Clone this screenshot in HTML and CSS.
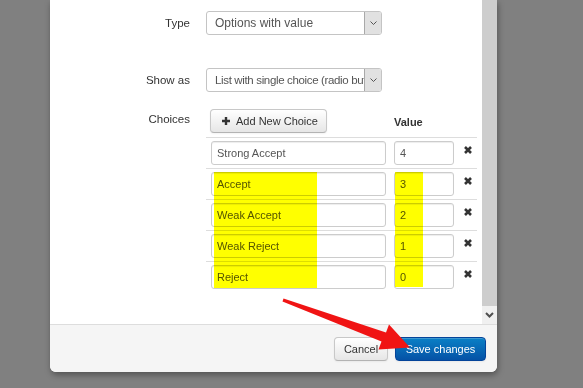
FILE: index.html
```html
<!DOCTYPE html>
<html lang="en">
<head>
    <meta name="viewport" content="width=device-width, initial-scale=1.0" />
    <title>Edit Field</title>
    <link rel="stylesheet" href="styles.css">
</head>
<body>
    <div class="page">
        <div class="modal">
            <div class="modal-body">
                <div class="form">
                    <div class="form-row row-type">
                        <label class="form-label">Type</label>
                        <div class="select">
                            <span class="select-text">Options with value</span>
                            <span class="select-arrow">
                                <svg width="7" height="4" viewBox="0 0 7 4"><path d="M0.5 0.5 L3.5 3.5 L6.5 0.5" fill="none" stroke="#555" stroke-width="1"/></svg>
                            </span>
                        </div>
                    </div>
                    <div class="form-row row-show">
                        <label class="form-label">Show as</label>
                        <div class="select">
                            <span class="select-text select-long">List with single choice (radio buttons)</span>
                            <span class="select-arrow">
                                <svg width="7" height="4" viewBox="0 0 7 4"><path d="M0.5 0.5 L3.5 3.5 L6.5 0.5" fill="none" stroke="#555" stroke-width="1"/></svg>
                            </span>
                        </div>
                    </div>
                    <div class="form-row row-choices">
                        <label class="form-label label-choices">Choices</label>
                        <table class="choices">
                            <tr class="choices-head">
                                <td class="col-name">
                                    <button class="btn btn-add">
                                        <svg class="icon-plus" width="8" height="8" viewBox="0 0 8 8"><path d="M4 0 V8 M0 4 H8" stroke="#333" stroke-width="2.4"/></svg>
                                        Add New Choice
                                    </button>
                                </td>
                                <td class="col-value"><span class="head-value">Value</span></td>
                                <td class="col-remove"></td>
                            </tr>
                            <tr>
                                <td class="col-name"><input class="input input-name" type="text" value="Strong Accept"></td>
                                <td class="col-value"><input class="input input-value" type="text" value="4"></td>
                                <td class="col-remove"><svg class="icon-remove" width="8" height="8" viewBox="0 0 8 8"><path d="M1 1 L7 7 M7 1 L1 7" stroke="#333" stroke-width="2.6"/></svg></td>
                            </tr>
                            <tr>
                                <td class="col-name"><input class="input input-name" type="text" value="Accept"></td>
                                <td class="col-value"><input class="input input-value" type="text" value="3"></td>
                                <td class="col-remove"><svg class="icon-remove" width="8" height="8" viewBox="0 0 8 8"><path d="M1 1 L7 7 M7 1 L1 7" stroke="#333" stroke-width="2.6"/></svg></td>
                            </tr>
                            <tr>
                                <td class="col-name"><input class="input input-name" type="text" value="Weak Accept"></td>
                                <td class="col-value"><input class="input input-value" type="text" value="2"></td>
                                <td class="col-remove"><svg class="icon-remove" width="8" height="8" viewBox="0 0 8 8"><path d="M1 1 L7 7 M7 1 L1 7" stroke="#333" stroke-width="2.6"/></svg></td>
                            </tr>
                            <tr>
                                <td class="col-name"><input class="input input-name" type="text" value="Weak Reject"></td>
                                <td class="col-value"><input class="input input-value" type="text" value="1"></td>
                                <td class="col-remove"><svg class="icon-remove" width="8" height="8" viewBox="0 0 8 8"><path d="M1 1 L7 7 M7 1 L1 7" stroke="#333" stroke-width="2.6"/></svg></td>
                            </tr>
                            <tr>
                                <td class="col-name"><input class="input input-name" type="text" value="Reject"></td>
                                <td class="col-value"><input class="input input-value" type="text" value="0"></td>
                                <td class="col-remove"><svg class="icon-remove" width="8" height="8" viewBox="0 0 8 8"><path d="M1 1 L7 7 M7 1 L1 7" stroke="#333" stroke-width="2.6"/></svg></td>
                            </tr>
                        </table>
                    </div>
                </div>
                <div class="scrollbar">
                    <div class="scroll-thumb"></div>
                    <div class="scroll-btn">
                        <svg width="9" height="6" viewBox="0 0 9 6"><path d="M1 1 L4.5 4.5 L8 1" fill="none" stroke="#505050" stroke-width="2"/></svg>
                    </div>
                </div>
            </div>
            <div class="modal-footer">
                <button class="btn btn-cancel">Cancel</button>
                <button class="btn btn-primary">Save changes</button>
            </div>
        </div>

        <!-- annotation overlays -->
        <div class="mark mark-name"></div>
        <div class="mark mark-value"></div>
        <svg class="arrow" width="583" height="388" viewBox="0 0 583 388">
            <polygon points="283.5,298.5 386,332.6 389,324.5 410,347.5 378.5,349.5 381.5,341.6 282.5,301.5" fill="#f01414"/>
        </svg>
    </div>
</body>
</html>
```

FILE: styles.css
```css
* {
    padding: 0;
    margin: 0;
    box-sizing: border-box;
    font-family: "Liberation Sans", Arial, sans-serif;
}
body {
    background-color: #808080;
    overflow: hidden;
}
.page {
    position: relative;
    width: 583px;
    height: 388px;
}
.modal {
    margin-left: 50px;
    width: 447px;
    background-color: #ffffff;
    border-radius: 0 0 6px 6px;
    box-shadow: 1px 3px 6px rgba(0, 0, 0, 0.35);
}
.modal-body {
    display: flex;
    height: 324px;
}
.form {
    flex: 1;
    padding: 11px 0 0 15px;
    overflow: hidden;
}
.form-row {
    display: flex;
    align-items: flex-start;
}
.form-label {
    width: 125px;
    margin-right: 16px;
    text-align: right;
    font-size: 11.5px;
    line-height: 24px;
    color: #333333;
}
.row-show {
    margin-top: 33px;
}
.row-choices {
    margin-top: 13px;
}
.label-choices {
    margin-top: 2px;
}
/* fake windows style select */
.select {
    display: flex;
    width: 176px;
    height: 24px;
    border: 1px solid #c4c4c4;
    border-radius: 3px;
    background-color: #ffffff;
    overflow: hidden;
}
.select-text {
    flex: 1;
    min-width: 0;
    padding-left: 8px;
    font-size: 12px;
    line-height: 22px;
    color: #555555;
    white-space: nowrap;
    overflow: hidden;
}
.select-long {
    font-size: 11.5px;
    letter-spacing: -0.35px;
}
.select-arrow {
    width: 17px;
    flex-shrink: 0;
    display: flex;
    align-items: center;
    justify-content: center;
    background-color: #e1e1e1;
    border-left: 1px solid #a9a9a9;
}
/* choices table */
.choices {
    width: 271px;
    border-collapse: collapse;
}
.choices td {
    border-top: 1px solid #dddddd;
    padding: 3px 0;
    vertical-align: top;
}
.choices .choices-head td {
    border-top: none;
    padding: 4px 0;
    vertical-align: middle;
}
.col-name {
    width: 184px;
    padding-left: 5px !important;
}
.choices-head .col-name {
    padding-left: 4px !important;
}
.col-value {
    width: 68px;
    padding-left: 4px !important;
}
.col-remove {
    width: 19px;
    text-align: center;
}
.choices td.col-remove {
    padding-top: 8px;
}
.head-value {
    font-size: 11px;
    font-weight: bold;
    color: #333333;
}
.input {
    display: block;
    height: 24px;
    padding: 0 5px;
    font-size: 11px;
    color: #555555;
    border: 1px solid #cccccc;
    border-radius: 3px;
    background-color: #ffffff;
    box-shadow: inset 0 1px 1px rgba(0, 0, 0, 0.075);
    outline: none;
}
.input-name {
    width: 175px;
}
.input-value {
    width: 60px;
}
.icon-remove {
    display: block;
    margin: 0 auto;
}
/* buttons */
.btn {
    height: 24px;
    padding: 0 10px;
    font-size: 11px;
    color: #333333;
    background-image: linear-gradient(to bottom, #ffffff, #e6e6e6);
    border: 1px solid #c8c8c8;
    border-bottom-color: #b3b3b3;
    border-radius: 4px;
    box-shadow: inset 0 1px 0 rgba(255, 255, 255, 0.2), 0 1px 2px rgba(0, 0, 0, 0.05);
    cursor: pointer;
}
.btn-add {
    display: flex;
    align-items: center;
    gap: 6px;
    width: 117px;
    padding: 0 0 0 11px;
}
.btn-cancel {
    width: 54px;
    padding: 0;
}
.btn-primary {
    width: 91px;
    padding: 0;
    color: #ffffff;
    background-image: linear-gradient(to bottom, #0a80c6, #0552a6);
    border-color: #04449a;
}
/* scrollbar */
.scrollbar {
    width: 15px;
    display: flex;
    flex-direction: column;
}
.scroll-thumb {
    flex: 1;
    background-color: #cdcdcd;
}
.scroll-btn {
    height: 18px;
    display: flex;
    align-items: center;
    justify-content: center;
    background-color: #f0f0f0;
}
.modal-footer {
    display: flex;
    justify-content: flex-end;
    gap: 7px;
    height: 48px;
    padding: 12px 11px 0 0;
    background-color: #f5f5f5;
    border-top: 1px solid #dddddd;
    border-radius: 0 0 6px 6px;
}
/* highlighter and arrow annotations */
.mark {
    position: absolute;
    background-color: #ffff00;
    mix-blend-mode: multiply;
}
.mark-name {
    left: 214px;
    top: 172px;
    width: 103px;
    height: 116px;
}
.mark-value {
    left: 395px;
    top: 172px;
    width: 28px;
    height: 115px;
}
.arrow {
    position: absolute;
    left: 0;
    top: 0;
    pointer-events: none;
}
```
